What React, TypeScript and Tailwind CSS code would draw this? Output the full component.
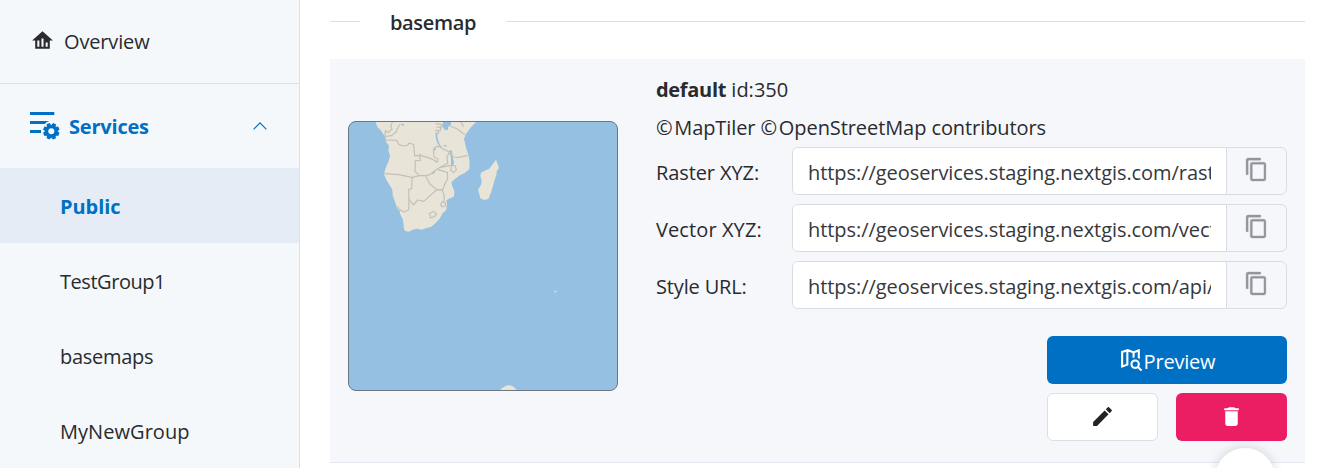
import React from "react";

const groups = [
  { name: "Public", style: "bg-[#e5ecf6] font-bold text-[#0070c5] tracking-[-0.05px]" },
  { name: "TestGroup1", style: "tracking-[-0.45px]" },
  { name: "basemaps", style: "tracking-[-0.3px]" },
  { name: "MyNewGroup", style: "tracking-[0.05px]" },
];

const links = [
  { label: "Raster XYZ:", url: "https://geoservices.staging.nextgis.com/raster/", tracking: "tracking-[-0.1px]" },
  { label: "Vector XYZ:", url: "https://geoservices.staging.nextgis.com/vector/", tracking: "tracking-[0.1px]" },
  { label: "Style URL:", url: "https://geoservices.staging.nextgis.com/api/", tracking: "tracking-[-0.15px]" },
];

function MdiIcon({ d, className }: { d: string; className?: string }) {
  return (
    <svg viewBox="0 0 24 24" fill="currentColor" className={`h-[25px] w-[25px] shrink-0 ${className ?? ""}`}>
      <path d={d} fillRule="evenodd" />
    </svg>
  );
}

const HOME = "M12 3 2 12H5V20H19V12H22L12 3M9 18H7V12H9V18M13 18H11V10H13V18M17 18H15V14H17V18Z";
const COPY =
  "M19 21H8V7H19M19 5H8A2 2 0 0 0 6 7V21A2 2 0 0 0 8 23H19A2 2 0 0 0 21 21V7A2 2 0 0 0 19 5M16 1H4A2 2 0 0 0 2 3V17H4V3H16V1Z";
const PENCIL =
  "M20.71 7.04C21.1 6.65 21.1 6 20.71 5.63L18.37 3.29C18 2.9 17.35 2.9 16.96 3.29L15.12 5.12L18.87 8.87M3 17.25V21H6.75L17.81 9.93L14.06 6.18L3 17.25Z";
const TRASH = "M19 4H15.5L14.5 3H9.5L8.5 4H5V6H19M6 19A2 2 0 0 0 8 21H16A2 2 0 0 0 18 19V7H6V19Z";
const MAP_SEARCH =
  "M15.5 12C18 12 20 14 20 16.5C20 17.38 19.75 18.21 19.31 18.9L22.39 22L21 23.39L17.88 20.32C17.19 20.75 16.37 21 15.5 21C13 21 11 19 11 16.5C11 14 13 12 15.5 12M15.5 14A2.5 2.5 0 0 0 13 16.5A2.5 2.5 0 0 0 15.5 19A2.5 2.5 0 0 0 18 16.5A2.5 2.5 0 0 0 15.5 14M19.5 2A.5 .5 0 0 1 20 2.5V11.81C19.42 11.26 18.75 10.81 18 10.5V4.7L15 5.86V10.03C14.3 10.08 13.62 10.24 13 10.5V5.87L9 4.47V17.6L2.66 19.97L2.5 20A.5 .5 0 0 1 2 19.5V4.38C2 4.15 2.15 3.97 2.36 3.9L8.5 2L14 4.1L19.34 2.03L19.5 2M4 5.46V17.31L7 16.2V4.6L4 5.46Z";

function ServicesIcon() {
  return (
    <svg viewBox="0 0 30 30" className="h-[30px] w-[30px] shrink-0" fill="#0070c5">
      <path d="M0 1H24.3V4H0ZM0 10H19.5Q16.5 10.6 14.8 13H0ZM0 19H11V22H0Z" />
      <g transform="translate(21.3 20.3)">
        {[0, 45, 90, 135].map((a) => (
          <path key={a} d="M-2.3 -5.4 -1.7 -8.2H1.7L2.3 -5.4V5.4L1.7 8.2H-1.7L-2.3 5.4Z" transform={`rotate(${a + 22.5})`} />
        ))}
        <circle r="6.3" />
        <circle r="3" fill="#f4f8fb" />
      </g>
    </svg>
  );
}

function MapPreview() {
  return (
    <div className="h-[270px] w-[270px] overflow-hidden rounded-lg border border-[#687782] bg-[#95c0e1]">
      <svg viewBox="0 0 268 268" className="block h-full w-full">
        <g transform="translate(-9 -12) scale(.33333)" strokeLinejoin="round" strokeLinecap="round">
          <path
            fill="#e8e4d8"
            d="M106 34 113 53 120 58 128 70 136 80 139 97 147 108 145 120 150 138 146 153 139 169 135 180 132 193 139 209 149 226 157 239 158 256 166 278 172 296 179 303 181 314 188 326 190 339 192 357 196 363 206 365 219 359 231 356 245 359 260 354 274 350 287 339 299 326 308 309 319 300 321 280 319 271 330 265 342 260 343 244 337 229 334 217 345 207 357 197 374 189 388 178 389 158 386 136 379 117 375 99 372 87 378 72 391 54 410 34Z"
          />
          <g fill="#95c0e1">
            <path d="M286 67 291 68 293 86 300 105 306 115 301 113 292 98 288 86Z" />
            <path d="M309 34H334L332 46 325 50 323 60 316 61 308 52Z" />
            <path d="M328 121 336 122 338 140 342 160 338 169 333 163 333 145Z" />
            <path d="M184 40 192 43 191 48 185 46ZM311 105 320 106 318 110 312 109ZM281 114 288 111 286 122 281 120ZM277 187 286 184 284 189 276 193Z" />
          </g>
          <g fill="none" stroke="#c3c0b9" strokeWidth="3.6">
            <path d="M139 90 170 91 176 103 188 108 202 106 208 99 221 104 224 137 239 136 241 151 226 152 225 184 238 197 216 202 176 194 133 191" />
            <path d="M135 80 136 61 144 68 156 57 152 48 157 37M139 79 154 77 168 66 173 54 180 44" />
            <path d="M241 132 242 137 265 143 278 148 291 157 294 147 282 141 280 120 289 109 304 110" />
            <path d="M304 114 329 127 321 139 323 160 302 171 286 181 269 194 257 197 238 197" />
            <path d="M294 179 322 187 323 207 315 221 308 240 289 238 270 223 257 198M216 202 215 236 206 238 207 269 206 299 193 306 178 299 174 291" />
            <path d="M207 267 220 285 233 270 251 274 267 260 289 240H307L313 258 312 274M307 275 316 277 316 288 306 291 302 284ZM268 311 281 304 290 312 283 320 272 324Z" />
            <path d="M329 122 339 141 356 142 385 136M335 165 346 168 349 179 341 188 332 181 335 165M302 172 331 166" />
            <path d="M289 41 303 43 308 48M290 51 302 52 306 43M287 61 300 63 303 51M294 61 295 71 288 71M331 48 352 57 373 73M362 34 370 49" />
          </g>
        </g>
        <g transform="translate(101 -12) scale(.33333)">
          <path fill="#e8e4d8" d="M138 149 146 170 146 177 141 181 139 195 133 213 127 235 120 256 115 267 102 270 91 265 87 249 84 239 93 225 95 213 91 198 93 188 104 182 118 176 128 163Z" />
        </g>
        <g transform="translate(-9 128) scale(.33333)">
          <path fill="#e8e4d8" d="M479 421Q509 390 531 421Z" />
          <path fill="#c5d5db" d="M641 120 647 123 654 120 650 125 647 130 643 126Z" />
        </g>
      </svg>
    </div>
  );
}

function Sidebar() {
  return (
    <aside className="flex h-full w-[300px] shrink-0 flex-col border-r border-[#d5e1ee] bg-[#f4f8fb]">
      <div className="flex h-[84px] shrink-0 items-center border-b border-[#d5e1ee] pl-[30px]">
        <MdiIcon d={HOME} className="mt-[-3px]" />
        <span className="ml-[9px] tracking-[-0.15px]">Overview</span>
      </div>
      <div className="flex h-[84px] shrink-0 items-center pl-[30px] text-[#0070c5]">
        <ServicesIcon />
        <span className="ml-2 flex-1 pt-0.5 pl-px font-bold tracking-[-0.2px]">Services</span>
        <svg viewBox="0 0 14 8" className="mr-[32px] h-2 w-3.5" fill="none" stroke="currentColor" strokeWidth="1.2">
          <path d="M.6 7.3 7 .9 13.4 7.3" />
        </svg>
      </div>
      {groups.map((g) => (
        <div key={g.name} className={`flex h-[75px] shrink-0 items-center pt-0.5 pl-[60px] ${g.style}`}>
          {g.name}
        </div>
      ))}
    </aside>
  );
}

export default function App() {
  return (
    <div className="relative flex h-[468px] w-full overflow-hidden bg-white font-['Open_Sans',sans-serif] text-[20px] leading-[30px] text-[#292b2e]">
      <Sidebar />
      <main className="flex flex-1 flex-col pr-[13px] pl-[30px]">
        <div className="flex h-[59px] shrink-0 pt-2">
          <span className="mt-[13px] h-px w-[30px] bg-[#dcdfe8]" />
          <span className="w-[146px] pl-[30px] font-semibold tracking-[-0.35px]">basemap</span>
          <span className="mt-[13px] h-px flex-1 bg-[#dcdfe8]" />
        </div>
        <section className="flex h-[404px] shrink-0 border-b border-[#e5e8f2] bg-[#f5f7fb] pr-[18px] pl-[18px]">
          <div className="pt-[62px]">
            <MapPreview />
          </div>
          <div className="ml-[37px] flex flex-1 flex-col pt-4">
            <div className="mb-2 pl-px">
              <b className="tracking-[-0.3px]">default</b> id:350
            </div>
            <div className="mb-1 pl-px tracking-[-0.08px]">
              <span className="tracking-[1.6px]">©</span>MapTiler <span className="tracking-[1.6px]">©</span>OpenStreetMap
              contributors
            </div>
            <div className="flex flex-col gap-[9px]">
              {links.map((l) => (
                <div key={l.label} className="flex h-12 items-center">
                  <span className={`w-[137px] pt-1 pl-px ${l.tracking}`}>{l.label}</span>
                  <div className="flex h-12 flex-1 overflow-hidden rounded-md border border-[#d9dce3]">
                    <div className="flex w-[433px] items-center bg-white px-[15px] pt-1">
                      <span className="w-[403px] overflow-hidden whitespace-nowrap tracking-[-0.06px] text-[#36383c]">{l.url}</span>
                    </div>
                    <div className="flex flex-1 items-start justify-center border-l border-[#d9dce3] pt-[9px] text-[#93959d]">
                      <MdiIcon d={COPY} className="stroke-current stroke-[0.35]" />
                    </div>
                  </div>
                </div>
              ))}
            </div>
            <div className="mt-[27px] flex w-[240px] flex-col gap-[9px] self-end">
              <button className="flex h-12 items-center justify-center rounded-md bg-[#0070c5] text-white">
                <MdiIcon d={MAP_SEARCH} className="mt-[-2px]" />
                <span className="pt-1 tracking-[-0.2px]">Preview</span>
              </button>
              <div className="grid grid-cols-2 gap-[18px]">
                <button className="flex h-12 items-center justify-center rounded-md border border-[#dcdfe5] bg-white text-[#212326]">
                  <MdiIcon d={PENCIL} className="mt-[-1px]" />
                </button>
                <button className="flex h-12 items-center justify-center rounded-md bg-[#eb1e63] text-white">
                  <MdiIcon d={TRASH} className="mt-[-1px]" />
                </button>
              </div>
            </div>
          </div>
        </section>
      </main>
      <div className="absolute top-[448px] left-[1215px] h-[60px] w-[60px] rounded-full bg-white shadow-[0_0_12px_rgba(0,0,0,0.16)]" />
    </div>
  );
}
